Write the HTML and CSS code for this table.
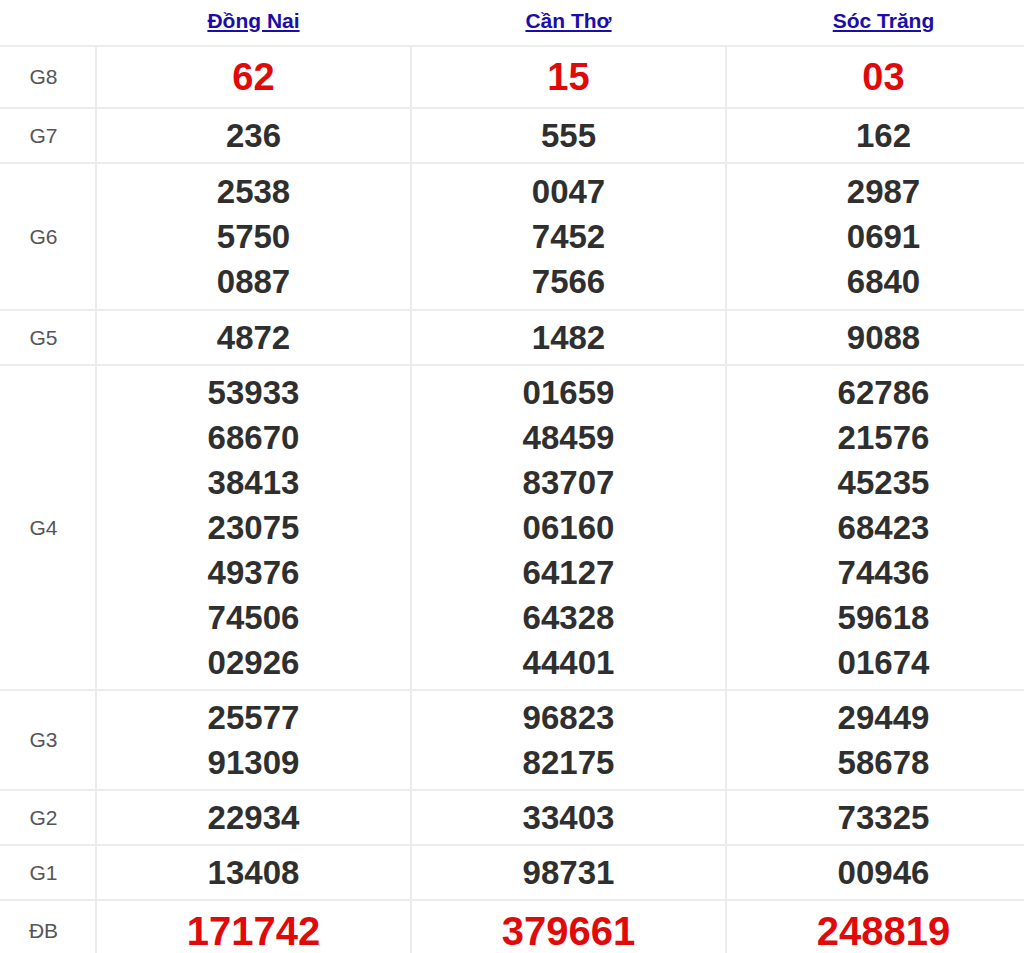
FILE: index.html
```html
<!DOCTYPE html>
<html lang="vi">
<head>
<meta charset="utf-8">
<title>Kết quả xổ số</title>
<link rel="stylesheet" href="styles.css">
</head>
<body>
<table class="kq">
  <colgroup>
    <col class="c-label">
    <col class="c-prov">
    <col class="c-prov">
    <col class="c-prov">
  </colgroup>
  <thead>
    <tr class="head">
      <th></th>
      <th><a href="#">Đồng Nai</a></th>
      <th><a href="#">Cần Thơ</a></th>
      <th><a href="#">Sóc Trăng</a></th>
    </tr>
  </thead>
  <tbody>
    <tr class="g8">
      <td class="lbl">G8</td>
      <td class="num red big">62</td>
      <td class="num red big">15</td>
      <td class="num red big">03</td>
    </tr>
    <tr>
      <td class="lbl">G7</td>
      <td class="num">236</td>
      <td class="num">555</td>
      <td class="num">162</td>
    </tr>
    <tr class="g6">
      <td class="lbl">G6</td>
      <td class="num"><div>2538</div><div>5750</div><div>0887</div></td>
      <td class="num"><div>0047</div><div>7452</div><div>7566</div></td>
      <td class="num"><div>2987</div><div>0691</div><div>6840</div></td>
    </tr>
    <tr>
      <td class="lbl">G5</td>
      <td class="num">4872</td>
      <td class="num">1482</td>
      <td class="num">9088</td>
    </tr>
    <tr>
      <td class="lbl">G4</td>
      <td class="num"><div>53933</div><div>68670</div><div>38413</div><div>23075</div><div>49376</div><div>74506</div><div>02926</div></td>
      <td class="num"><div>01659</div><div>48459</div><div>83707</div><div>06160</div><div>64127</div><div>64328</div><div>44401</div></td>
      <td class="num"><div>62786</div><div>21576</div><div>45235</div><div>68423</div><div>74436</div><div>59618</div><div>01674</div></td>
    </tr>
    <tr>
      <td class="lbl">G3</td>
      <td class="num"><div>25577</div><div>91309</div></td>
      <td class="num"><div>96823</div><div>82175</div></td>
      <td class="num"><div>29449</div><div>58678</div></td>
    </tr>
    <tr>
      <td class="lbl">G2</td>
      <td class="num">22934</td>
      <td class="num">33403</td>
      <td class="num">73325</td>
    </tr>
    <tr>
      <td class="lbl">G1</td>
      <td class="num">13408</td>
      <td class="num">98731</td>
      <td class="num">00946</td>
    </tr>
    <tr class="db">
      <td class="lbl">ĐB</td>
      <td class="num red huge">171742</td>
      <td class="num red huge">379661</td>
      <td class="num red huge">248819</td>
    </tr>
  </tbody>
</table>
</body>
</html>
```

FILE: styles.css
```css
html, body {
  margin: 0;
  padding: 0;
  overflow: hidden;
  background: #fff;
}

body {
  font-family: "Liberation Sans", Arial, sans-serif;
}

.kq {
  width: 1042px;
  table-layout: fixed;
  border-collapse: collapse;
}

.c-label { width: 96px; }
.c-prov { width: 315px; }

.kq th,
.kq td {
  border: 2px solid #ececec;
  text-align: center;
  vertical-align: middle;
  padding: 0;
}

.kq tr:last-child td { border-bottom: none; }
.kq tr td:first-child,
.kq tr th:first-child { border-left: none; }

.head th {
  border-top: none;
  border-left: none;
  border-right: none;
  height: 45px;
  padding: 0;
  vertical-align: middle;
}

.head a {
  color: #1a0dab;
  font-weight: bold;
  font-size: 21px;
  text-decoration: underline;
  position: relative;
  top: -2px;
}

.lbl {
  color: #555;
  font-size: 21px;
  padding-right: 8px !important;
}

.num {
  color: #2f2f2f;
  font-weight: bold;
  font-size: 33px;
  line-height: 45px;
  padding: 4px 0 !important;
}

.g6 .num {
  padding: 5px 0 !important;
}

.red { color: #e00a0a; }

.big {
  font-size: 38px;
  line-height: 52px;
}

.huge {
  font-size: 40px;
  line-height: 52px;
}
```
